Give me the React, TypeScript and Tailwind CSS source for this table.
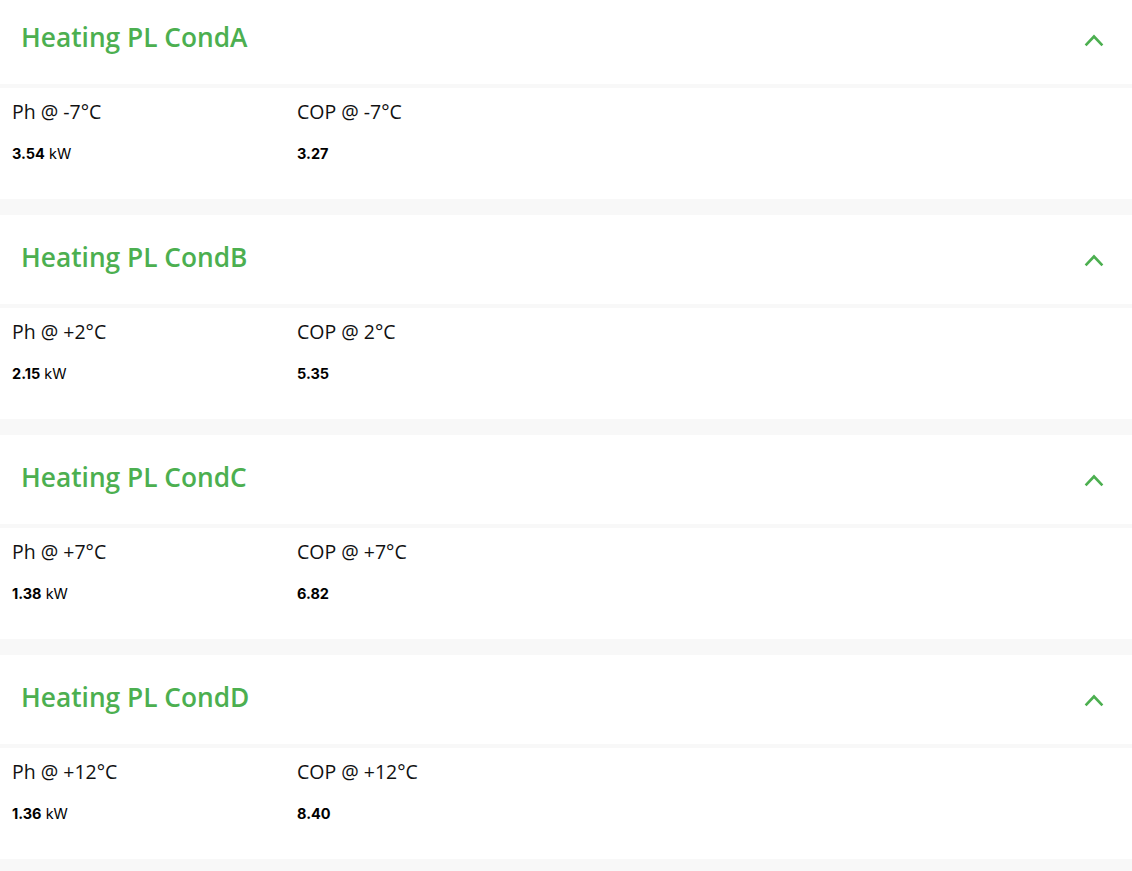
const sections = [
  { title: "Heating PL CondA", ph: "Ph @ -7°C", cop: "COP @ -7°C", phVal: "3.54", copVal: "3.27" },
  { title: "Heating PL CondB", ph: "Ph @ +2°C", cop: "COP @ 2°C", phVal: "2.15", copVal: "5.35" },
  { title: "Heating PL CondC", ph: "Ph @ +7°C", cop: "COP @ +7°C", phVal: "1.38", copVal: "6.82" },
  { title: "Heating PL CondD", ph: "Ph @ +12°C", cop: "COP @ +12°C", phVal: "1.36", copVal: "8.40" },
]

const sans = { fontFamily: '"Open Sans", "Noto Sans", sans-serif' }
const inter = { fontFamily: "Inter, sans-serif" }

function Chevron() {
  return (
    <svg width="20" height="14" viewBox="0 0 20 14" fill="none" className="text-[#4caf50]">
      <polyline
        points="2.5,11.5 10,3.5 17.5,11.5"
        stroke="currentColor"
        strokeWidth="2.6"
        strokeLinecap="square"
        strokeLinejoin="miter"
      />
    </svg>
  )
}

export default function App() {
  return (
    <div className="w-[1132px] h-[871px] overflow-hidden bg-[#f8f8f8]">
      <div className="-mt-[5px] flex flex-col">
        {sections.map((s) => (
          <div key={s.title} className="flex flex-col mb-4">
            {/* Header */}
            <div className="h-[89px] bg-white flex items-center justify-between pl-[21px] pr-[28px]">
              <h2 className="text-[26.3px] font-semibold text-[#4caf50] -mt-[4px]" style={sans}>
                {s.title}
              </h2>
              <Chevron />
            </div>
            {/* Body */}
            <div className="mt-1 h-[111px] bg-white flex px-3 pt-[11px]">
              <div className="w-[285px] flex flex-col">
                <span className="text-[19.5px] text-[#111] leading-[26px]" style={sans}>
                  {s.ph}
                </span>
                <span className="mt-[19px] text-[14.5px] text-black leading-5" style={inter}>
                  <span className="font-bold">{s.phVal}</span> kW
                </span>
              </div>
              <div className="flex flex-col">
                <span className="text-[19.5px] text-[#111] leading-[26px]" style={sans}>
                  {s.cop}
                </span>
                <span className="mt-[19px] text-[14.5px] text-black font-bold leading-5" style={inter}>
                  {s.copVal}
                </span>
              </div>
            </div>
          </div>
        ))}
      </div>
    </div>
  )
}
